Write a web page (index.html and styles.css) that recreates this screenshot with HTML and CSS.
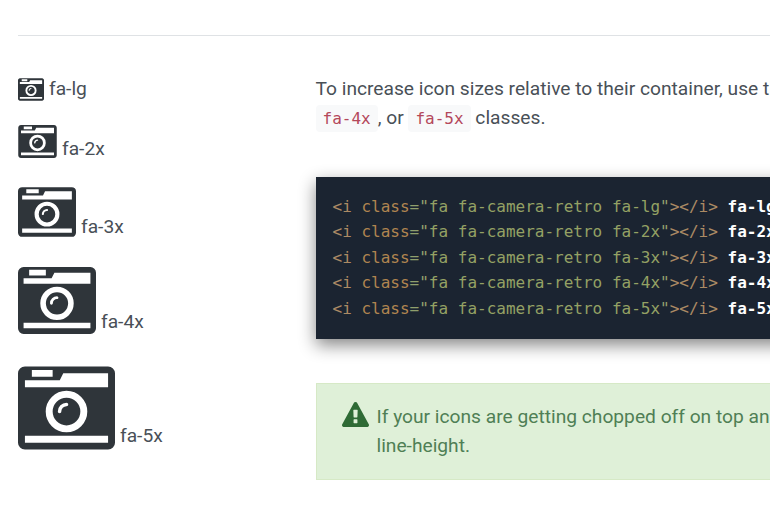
FILE: index.html
```html
<!DOCTYPE html>
<html lang="en">
<head>
<meta charset="utf-8">
<title>Larger icons</title>
<link rel="stylesheet" href="styles.css">
</head>
<body>
<svg class="defs" aria-hidden="true">
  <symbol id="camera" viewBox="0 128 1792 1536"><path d="M928 832q0-14-9-23t-23-9q-66 0-113 47t-47 113q0 14 9 23t23 9 23-9 9-23q0-40 28-68t68-28q14 0 23-9t9-23zm224 130q0 106-75 181t-181 75-181-75-75-181 75-181 181-75 181 75 75 181zm-1024 574h1536v-128h-1536v128zm1152-574q0-159-112.5-271.5t-271.5-112.5-271.5 112.5-112.5 271.5 112.5 271.5 271.5 112.5 271.5-112.5 112.5-271.5zm-1024-642h384v-128h-384v128zm-128 192h1536v-256h-828l-64 128h-644v128zm1664-256v1280q0 53-37.5 90.5t-90.5 37.5h-1536q-53 0-90.5-37.5t-37.5-90.5v-1280q0-53 37.5-90.5t90.5-37.5h1536q53 0 90.5 37.5t37.5 90.5z"/></symbol>
</svg>
<main class="page">
  <hr class="rule">
  <div class="columns">
    <div class="examples">
      <div class="example ex-lg"><svg class="cam cam-lg"><use href="#camera"/></svg><span>fa-lg</span></div>
      <div class="example ex-2x"><svg class="cam cam-2x"><use href="#camera"/></svg><span>fa-2x</span></div>
      <div class="example ex-3x"><svg class="cam cam-3x"><use href="#camera"/></svg><span>fa-3x</span></div>
      <div class="example ex-4x"><svg class="cam cam-4x"><use href="#camera"/></svg><span>fa-4x</span></div>
      <div class="example ex-5x"><svg class="cam cam-5x"><use href="#camera"/></svg><span>fa-5x</span></div>
    </div>
    <div class="details">
      <p class="lead">To increase icon sizes relative to their container, use the <code>fa-lg</code> (33% increase), <code>fa-2x</code>, <code>fa-3x</code>,<br><code>fa-4x</code>, or <code>fa-5x</code> classes.</p>
      <pre class="code"><span class="t">&lt;i</span> <span class="a">class</span><span class="e">=</span><span class="p">"</span><span class="s">fa fa-camera-retro fa-lg</span><span class="p">"</span><span class="t">&gt;&lt;/i&gt;</span> <b>fa-lg</b>
<span class="t">&lt;i</span> <span class="a">class</span><span class="e">=</span><span class="p">"</span><span class="s">fa fa-camera-retro fa-2x</span><span class="p">"</span><span class="t">&gt;&lt;/i&gt;</span> <b>fa-2x</b>
<span class="t">&lt;i</span> <span class="a">class</span><span class="e">=</span><span class="p">"</span><span class="s">fa fa-camera-retro fa-3x</span><span class="p">"</span><span class="t">&gt;&lt;/i&gt;</span> <b>fa-3x</b>
<span class="t">&lt;i</span> <span class="a">class</span><span class="e">=</span><span class="p">"</span><span class="s">fa fa-camera-retro fa-4x</span><span class="p">"</span><span class="t">&gt;&lt;/i&gt;</span> <b>fa-4x</b>
<span class="t">&lt;i</span> <span class="a">class</span><span class="e">=</span><span class="p">"</span><span class="s">fa fa-camera-retro fa-5x</span><span class="p">"</span><span class="t">&gt;&lt;/i&gt;</span> <b>fa-5x</b></pre>
      <div class="alert">
        <svg class="warn" viewBox="0 0 1792 1792"><path d="M1024 1375v-190q0-14-9.5-23.5t-22.5-9.5h-192q-13 0-22.5 9.5t-9.5 23.5v190q0 14 9.5 23.5t22.5 9.5h192q13 0 22.5-9.5t9.5-23.5zm-2-374l18-459q0-12-10-19-13-11-24-11h-220q-11 0-24 11-10 7-10 21l17 457q0 10 10 16.5t24 6.5h185q14 0 23.5-6.5t10.5-16.5zm-14-934l768 1408q35 63-2 126-17 29-46.5 46t-63.5 17h-1536q-34 0-63.5-17t-46.5-46q-37-63-2-126l768-1408q17-31 47-49t65-18 65 18 47 49z"/></svg>
        <p class="alert-text">If your icons are getting chopped off on top and bottom, increase the<br>line-height.</p>
      </div>
    </div>
  </div>
</main>
</body>
</html>
```
FILE: styles.css
```css
html, body {
  margin: 0;
  padding: 0;
  height: 513px;
  overflow: hidden;
  background: #fff;
}
.defs {
  display: none;
}
.page {
  width: 1200px;
  padding: 35px 0 0 18px;
  font-family: Roboto, "Liberation Sans", sans-serif;
  font-size: 19.2px;
  color: #495057;
}
.rule {
  margin: 0;
  border: 0;
  border-top: 1px solid #dfe2e5;
}
.columns {
  display: grid;
  grid-template-columns: 298px 1fr;
  padding-top: 28px;
}
.examples {
  display: flex;
  flex-direction: column;
  padding-top: 14px;
}
.example {
  display: flex;
  align-items: flex-end;
  gap: 5px;
  line-height: 21px;
}
.example span {
  position: relative;
}
.cam {
  display: block;
  fill: #2f353a;
  flex: none;
}
.cam-lg { width: 26px; height: 23px; }
.cam-2x { width: 39px; height: 33px; }
.cam-3x { width: 58px; height: 50px; }
.cam-4x { width: 78px; height: 67px; }
.cam-5x { width: 97px; height: 84px; }
.ex-lg span { top: -2px; }
.ex-2x { margin-top: 24px; }
.ex-2x span { top: 1px; }
.ex-3x { margin-top: 29px; }
.ex-3x span { top: 0; }
.ex-4x { margin-top: 30px; }
.ex-4x span { top: -2px; }
.ex-5x { margin-top: 32px; }
.ex-5x span { top: -4px; }
.details {
  min-width: 0;
  margin-left: -0.5px;
}
.lead {
  margin: 10px 0 0;
  line-height: 29px;
}
code {
  display: inline-block;
  font-family: "DejaVu Sans Mono", monospace;
  font-size: 16px;
  line-height: 27px;
  padding: 0 7px;
  background: #f8f9fa;
  border-radius: 4px;
  color: #b4485a;
  vertical-align: 0;
}
.code {
  margin: 45px 0 0;
  padding: 16.5px 17px 18px;
  height: 127.5px;
  background: #1b2431;
  color: #d8dee9;
  font-family: "DejaVu Sans Mono", monospace;
  font-size: 16px;
  line-height: 25.5px;
  box-shadow: 0 6px 16px rgba(0, 0, 0, 0.48);
}
.code b { color: #fff; font-weight: 700; }
.t { color: #ab8a64; }
.a { color: #b08450; }
.e { color: #8f9f6c; }
.p { color: #94a06e; }
.s { color: #94a164; }
.alert {
  margin-top: 44px;
  display: flex;
  gap: 8px;
  padding: 18px 25px 19px;
  height: 58px;
  background: #dff0d8;
  border: 1px solid #d6e9c6;
  color: #4f7f55;
}
.warn {
  width: 27px;
  height: 27px;
  fill: #2f6b35;
  flex: none;
}
.alert-text {
  margin: 0;
  line-height: 29px;
}
```
